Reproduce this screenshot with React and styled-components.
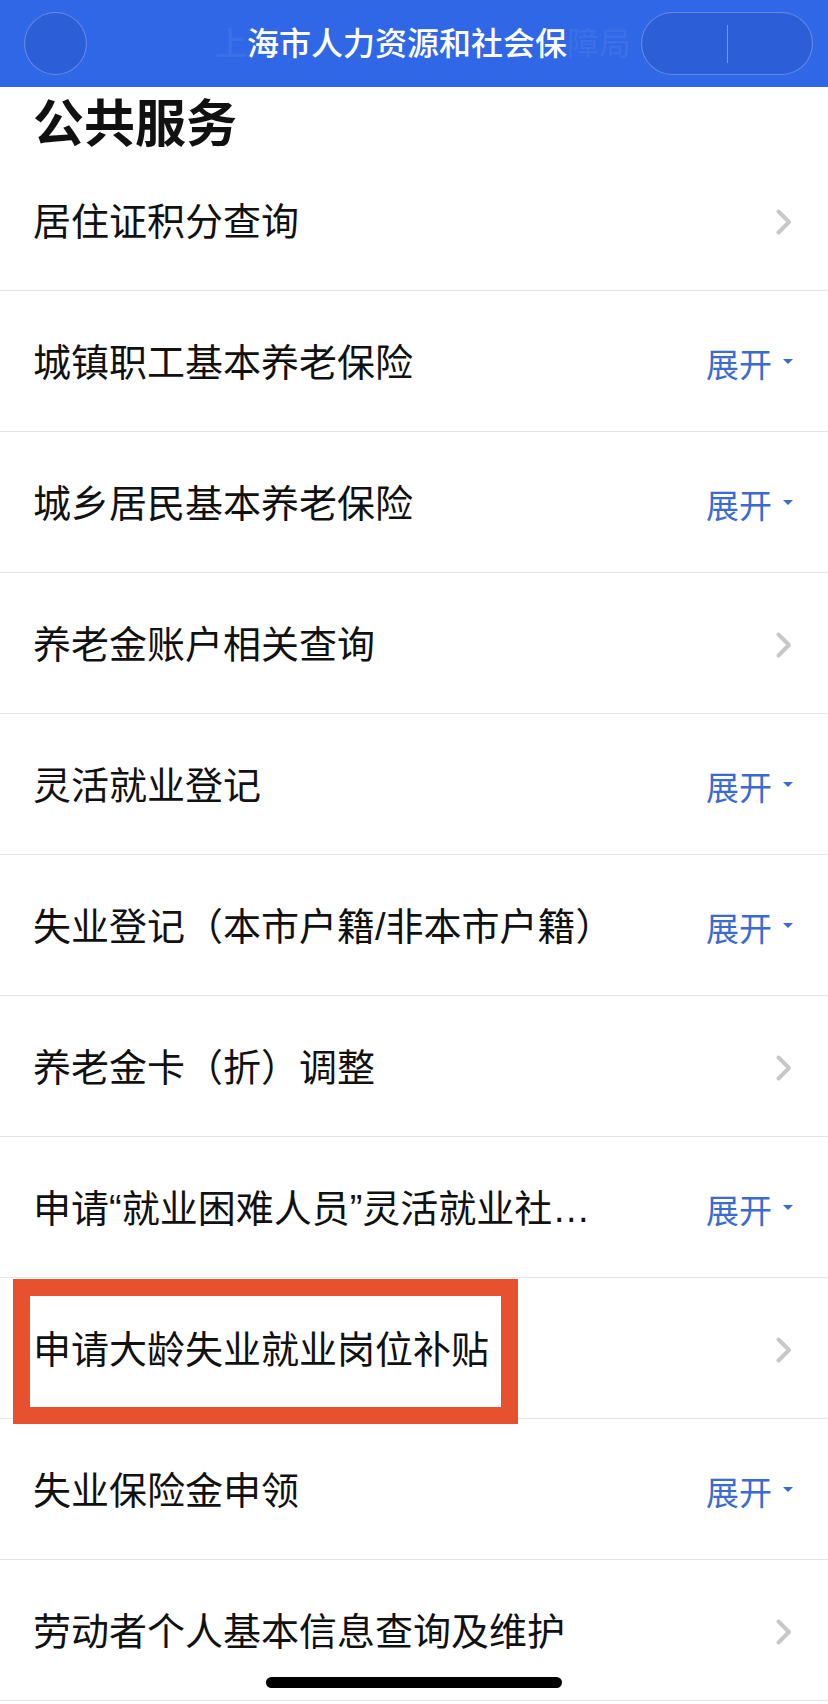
import React from "react";
import styled, { createGlobalStyle } from "styled-components";

const GlobalStyle = createGlobalStyle`
  html, body {
    margin: 0;
    padding: 0;
    background: #ffffff;
  }
  body {
    font-family: "Liberation Sans", "Noto Sans CJK SC", sans-serif;
    -webkit-font-smoothing: antialiased;
  }
  * { box-sizing: border-box; }
`;

const Page = styled.div`
  position: relative;
  width: 828px;
  height: 1704px;
  overflow: hidden;
  background: #ffffff;
`;

const Header = styled.header`
  display: flex;
  align-items: center;
  height: 87px;
  padding: 0 15px 0 24px;
  background: #3067e6;
`;

const RoundButton = styled.div`
  flex: none;
  width: 63px;
  height: 63px;
  border-radius: 50%;
  background: #2c5ed8;
  border: 1px solid rgba(255, 255, 255, 0.28);
`;

const TitleWindow = styled.div`
  flex: none;
  width: 426px;
  margin: 0 0 6px 123px;
  overflow: hidden;
  white-space: nowrap;
`;

const TitleText = styled.div`
  padding-left: 5px;
  font-family: "Noto Sans CJK SC", sans-serif;
  font-size: 32px;
  font-weight: 500;
  line-height: 40px;
  color: #ffffff;
`;

const FadedChars = styled.span`
  color: rgba(255, 255, 255, ${(p) => p.$alpha});
`;

const Capsule = styled.div`
  flex: none;
  display: flex;
  align-items: center;
  justify-content: center;
  margin-left: auto;
  width: 172px;
  height: 63px;
  border-radius: 32px;
  background: #2c5ed8;
  border: 1px solid rgba(255, 255, 255, 0.28);
`;

const CapsuleDivider = styled.span`
  width: 1px;
  height: 38px;
  background: rgba(255, 255, 255, 0.35);
`;

const SectionTitle = styled.h1`
  margin: 0;
  height: 63px;
  padding: 2px 0 0 33px;
  font-family: "Noto Sans CJK SC", sans-serif;
  font-size: 51px;
  font-weight: 700;
  line-height: 63px;
  color: #111111;
`;

const List = styled.ul`
  margin: 0;
  padding: 0;
  list-style: none;
`;

const Row = styled.li`
  position: relative;
  display: flex;
  align-items: center;
  justify-content: space-between;
  height: 141px;
  padding: 3px 35px 0 33px;
  border-bottom: 1px solid #e4e4e6;
`;

const RowLabel = styled.span`
  font-size: 38px;
  line-height: 48px;
  color: #111111;
  white-space: nowrap;
`;

const Expand = styled.span`
  display: flex;
  align-items: center;
  gap: 11px;
  font-family: "Noto Sans CJK SC", sans-serif;
  font-size: 33px;
  line-height: 40px;
  color: #3b6bd0;
`;

const Caret = styled.span`
  width: 0;
  height: 0;
  border-left: 5px solid transparent;
  border-right: 5px solid transparent;
  border-top: 5px solid #3b6bd0;
  margin-top: -2px;
`;

const Highlight = styled.div`
  position: absolute;
  left: 13px;
  top: 1px;
  width: 505px;
  height: 145px;
  border: 17px solid #e8512f;
  pointer-events: none;
`;

const HomeBar = styled.div`
  position: absolute;
  left: 266px;
  bottom: 16px;
  width: 296px;
  height: 11px;
  border-radius: 6px;
  background: #000000;
`;

const Chevron = () => (
  <svg width="18" height="28" viewBox="0 0 18 28" aria-hidden="true">
    <path
      d="M3.5 3.5 L14 14 L3.5 24.5"
      fill="none"
      stroke="#c8c8cb"
      strokeWidth="4"
      strokeLinecap="round"
      strokeLinejoin="round"
    />
  </svg>
);

const rows = [
  { label: "居住证积分查询", expand: false },
  { label: "城镇职工基本养老保险", expand: true },
  { label: "城乡居民基本养老保险", expand: true },
  { label: "养老金账户相关查询", expand: false },
  { label: "灵活就业登记", expand: true },
  { label: "失业登记（本市户籍/非本市户籍）", expand: true },
  { label: "养老金卡（折）调整", expand: false },
  { label: "申请“就业困难人员”灵活就业社…", expand: true },
  { label: "申请大龄失业就业岗位补贴", expand: false, highlight: true },
  { label: "失业保险金申领", expand: true },
  { label: "劳动者个人基本信息查询及维护", expand: false },
];

export default function App() {
  return (
    <>
      <GlobalStyle />
      <Page>
        <Header>
          <RoundButton />
          <TitleWindow>
            <TitleText>
              <FadedChars $alpha={0.07}>上</FadedChars>
              海市人力资源和社会保
              <FadedChars $alpha={0.06}>障局</FadedChars>
            </TitleText>
          </TitleWindow>
          <Capsule>
            <CapsuleDivider />
          </Capsule>
        </Header>
        <SectionTitle>公共服务</SectionTitle>
        <List>
          {rows.map((r) => (
            <Row key={r.label}>
              <RowLabel>{r.label}</RowLabel>
              {r.expand ? (
                <Expand>
                  展开
                  <Caret />
                </Expand>
              ) : (
                <Chevron />
              )}
              {r.highlight && <Highlight />}
            </Row>
          ))}
        </List>
        <HomeBar />
      </Page>
    </>
  );
}
